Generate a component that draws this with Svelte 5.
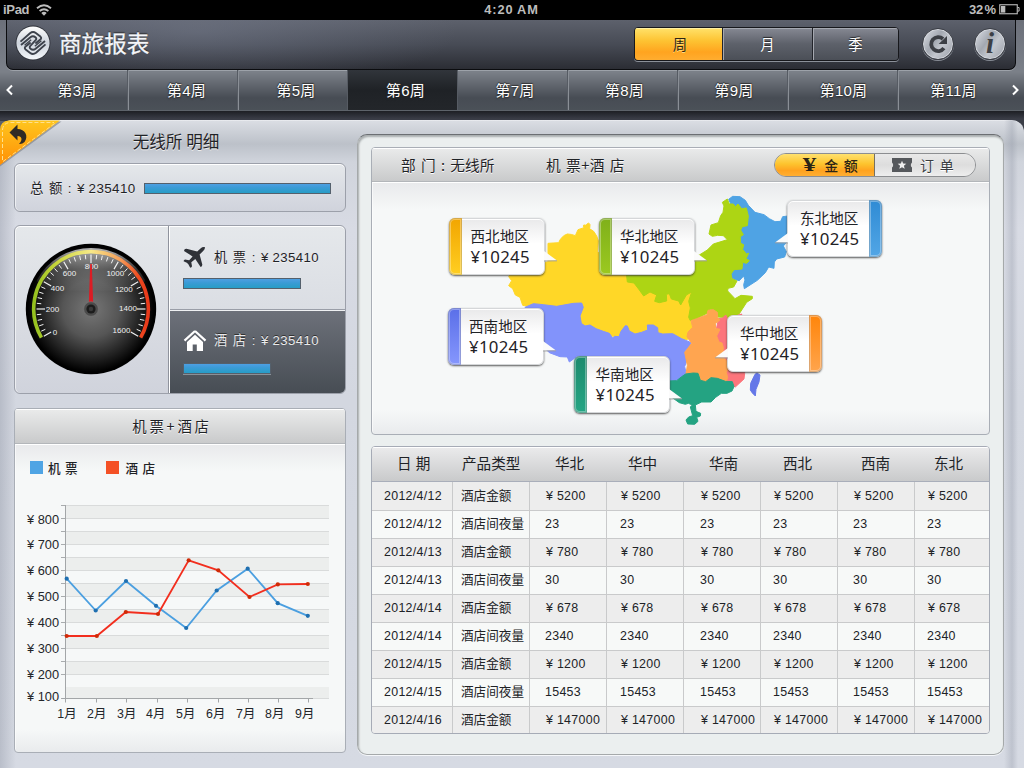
<script>
  const weeks = ['第3周', '第4周', '第5周', '第6周', '第7周', '第8周', '第9周', '第10周', '第11周'];
  const periods = ['周', '月', '季'];
  const columns = ['华北', '华中', '华南', '西北', '西南', '东北'];
  const rows = [
    ['2012/4/12', '酒店金额', '¥ 5200'],
    ['2012/4/12', '酒店间夜量', '23'],
    ['2012/4/13', '酒店金额', '¥ 780'],
    ['2012/4/13', '酒店间夜量', '30'],
    ['2012/4/14', '酒店金额', '¥ 678'],
    ['2012/4/14', '酒店间夜量', '2340'],
    ['2012/4/15', '酒店金额', '¥ 1200'],
    ['2012/4/15', '酒店间夜量', '15453'],
    ['2012/4/16', '酒店金额', '¥ 147000']
  ];

  const regions = [
    { name: '西北地区', x: 77, y: 36, pad: 9.5, side: 'left', from: '#f2a500', to: '#ffcf22' },
    { name: '华北地区', x: 227, y: 36, pad: 9, side: 'left', from: '#7fb01a', to: '#9cc920' },
    { name: '西南地区', x: 76, y: 126, pad: 9, side: 'left', from: '#5a6fe8', to: '#8697fd' },
    { name: '华南地区', x: 202, y: 174, pad: 9.5, side: 'left', from: '#1d8a6d', to: '#25a684' },
    { name: '东北地区', x: 415, y: 18, pad: 12, side: 'right', from: '#2f8bd4', to: '#52a6e6' },
    { name: '华中地区', x: 355, y: 133, pad: 12, side: 'right', from: '#ff850a', to: '#ffa54d' }
  ];

  const stripes = Array.from({ length: 15 }, (_, i) => (i === 14 ? 698.5 : 505.5 + i * 13));
  const yLabels = [
    [800, 524], [700, 549], [600, 575], [500, 601], [400, 626.5], [300, 653], [200, 679], [100, 701]
  ];
  const xLabels = [67, 96.7, 126.7, 155.7, 185.7, 215.7, 245.7, 274.7, 304.7];
  const xTicks = [65.5, 96.5, 126.5, 157.5, 187.5, 218.5, 248.5, 278.5, 308.5];
  const flight = [[66.7, 578.7], [95.7, 610.5], [126, 581], [156, 605.8], [186.2, 628], [216.7, 590.5], [247.7, 568.7], [277.7, 603.2], [307.8, 615.8]];
  const hotel = [[66.7, 636], [96.8, 636], [125.8, 612], [158, 614], [188.7, 560.3], [218.3, 570.3], [249.5, 597], [277.8, 584.4], [307.8, 584]];
  const line = (pts) => pts.map((p) => p.join(',')).join(' ');

  const ticks = Array.from({ length: 41 }, (_, i) => {
    const a = ((210 - i * 6) * Math.PI) / 180;
    const inner = i % 5 === 0 ? 46 : 50;
    return {
      major: i % 5 === 0,
      x1: 65 + Math.cos(a) * inner, y1: 65 - Math.sin(a) * inner,
      x2: 65 + Math.cos(a) * 54.5, y2: 65 - Math.sin(a) * 54.5
    };
  });
  const dial = [
    [0, 29, 91], [200, 26.5, 68], [400, 31.5, 46.5], [600, 43.5, 32], [800, 65.5, 25],
    [1000, 89.3, 32], [1200, 97.8, 48], [1400, 102, 67.2], [1600, 95.5, 88.8]
  ];
</script>

<div class="app">
  <div class="status">
    <div class="device">
      <span>iPad</span>
      <svg width="16" height="12" viewBox="0 0 16 12">
        <g fill="none" stroke="#bdbdbd" stroke-width="1.9">
          <path d="M1 4.3 Q8 -1.6 15 4.3" /><path d="M3.6 7 Q8 3.4 12.4 7" />
        </g>
        <path d="M5.3 8.9 Q8 6.8 10.7 8.9 L8 11.7Z" fill="#bdbdbd" />
      </svg>
    </div>
    <b class="clock">4:20 AM</b>
    <div class="battery">
      <span>32&#8202;%</span>
      <svg width="21" height="11" viewBox="0 0 21 11">
        <rect x=".75" y=".75" width="17.5" height="9" fill="none" stroke="#bdbdbd" stroke-width="1.1" />
        <rect x="2" y="2" width="4.3" height="6.6" fill="#bdbdbd" />
        <path d="M18.5 3.5h1.6v3.6h-1.6" fill="none" stroke="#bdbdbd" />
      </svg>
    </div>
  </div>

  <header>
    <div class="bar">
      <svg class="logo" width="36" height="36" viewBox="0 0 36 36">
        <defs>
          <linearGradient id="logoFill" x2="0" y2="1"><stop offset="0" stop-color="#fff" /><stop offset=".5" stop-color="#cdd3dc" /><stop offset="1" stop-color="#f4f7fa" /></linearGradient>
        </defs>
        <circle cx="18" cy="18" r="17.4" fill="#2b2e36" />
        <circle cx="18" cy="18" r="16.6" fill="url(#logoFill)" />
        <g fill="none" stroke="#3d424c" stroke-width="1.9" stroke-linejoin="round">
          <path d="M5.5 16.6L15 8.2Q18 5.8 20.8 8L25.4 11.6Q27 13 25.3 14.6L20.4 18.6" />
          <path d="M5.5 16.6L15 8.2Q18 5.8 20.8 8L25.4 11.6Q27 13 25.3 14.6L20.4 18.6" transform="rotate(180 18 18)" />
          <path d="M6 20L15.4 12.2Q18 10.2 20.4 12.2Q22.2 13.8 20.4 15.4L15.6 20.6Q13.8 22.2 15.6 23.8Q18 25.8 20.6 23.8L30 16" />
          <path d="M9.6 20.2L16.2 14.8M26.4 15.8L19.8 21.2" stroke-width="1.3" />
        </g>
      </svg>
      <h1>商旅报表</h1>
      <div class="periods">
        {#each periods as p, i}<div class="period" class:on={i === 0}>{p}</div>{/each}
      </div>
      <div class="round">
        <svg width="24" height="24" viewBox="0 0 24 24">
          <path d="M17.9 16.2 A7 7 0 1 1 17 7" fill="none" stroke="#3c3f45" stroke-width="3.8" />
          <path d="M21 4 V12 H12.6 Z" fill="#3c3f45" />
        </svg>
      </div>
      <div class="round info"><i>i</i></div>
    </div>
    <nav>
      <svg class="arrow" width="18" height="40" viewBox="0 0 18 40"><path d="M12 15.5 L7.5 20 L12 24.5" fill="none" stroke="#fff" stroke-width="2" /></svg>
      {#each weeks as w, i}<div class="week" class:active={i === 3} style="padding-left:{9 - i}px">{w}</div>{/each}
      <svg class="arrow" width="16" height="40" viewBox="0 0 16 40"><path d="M5 15.5 L9.5 20 L5 24.5" fill="none" stroke="#fff" stroke-width="2" /></svg>
    </nav>
  </header>

  <main>
    <svg class="ribbon" width="62" height="47" viewBox="0 0 62 47">
      <defs><linearGradient id="orange" x2="0" y2="1"><stop offset="0" stop-color="#ffc61e" /><stop offset="1" stop-color="#ff8f05" /></linearGradient></defs>
      <path d="M0 46.5 L61.5 1.5 L0 1Z" fill="#777b84" opacity=".6" />
      <path d="M0 45 L60 .5 H9 Q0 1 0 10Z" fill="url(#orange)" />
      <path d="M2.5 40 V10 Q3 3 10 2.5 H54 M3 41.5 L56 2.5" fill="none" stroke="#ffe08c" stroke-width="1" stroke-dasharray="4 2" />
      <path d="M9.5 12.5 L17.5 4.5 V9 C25 9 29 16 24.5 22 Q22 24.5 19 24 C23 20 22 16 17.5 16 V20.5Z" fill="#2f2b25" />
    </svg>

    <section class="left">
      <h2>无线所 明细</h2>
      <div class="card total">
        <span class="amount">总 额 : <em>¥</em> 235410</span>
        <div class="meter" style="width:187px"></div>
      </div>

      <div class="card stats">
        <div class="gauge">
          <svg width="132" height="132" viewBox="-1 -1 132 132">
            <defs>
              <radialGradient id="face"><stop offset="0" stop-color="#777" /><stop offset=".45" stop-color="#555" /><stop offset=".8" stop-color="#202020" /><stop offset="1" stop-color="#000" /></radialGradient>
              <linearGradient id="shine" x2="0" y2="1"><stop offset="0" stop-color="#fff" stop-opacity=".7" /><stop offset=".5" stop-color="#fff" stop-opacity=".2" /><stop offset="1" stop-color="#fff" stop-opacity=".02" /></linearGradient>
              <linearGradient id="scale" gradientUnits="userSpaceOnUse" x1="8" y1="0" x2="122" y2="0"><stop offset="0" stop-color="#95c11f" /><stop offset=".2" stop-color="#c8d63c" /><stop offset=".5" stop-color="#f7e988" /><stop offset=".75" stop-color="#f5a05c" /><stop offset=".92" stop-color="#ee4a20" /><stop offset="1" stop-color="#e8391a" /></linearGradient>
            </defs>
            <circle cx="65" cy="65" r="65.2" fill="#000" />
            <circle cx="65" cy="65" r="63" fill="url(#face)" />
            <path d="M11 36 A61.5 61.5 0 0 1 119 36 Q118 48 65 46.5 Q12 48 11 36Z" fill="url(#shine)" />
            <path d="M15.4 93.6 A57.3 57.3 0 1 1 114.6 93.6" fill="none" stroke="url(#scale)" stroke-width="3.6" />
            {#each ticks as t}
              <line x1={t.x1} y1={t.y1} x2={t.x2} y2={t.y2} stroke="#f2f2f2" stroke-width={t.major ? 1.2 : 1} />
            {/each}
            {#each dial as [v, x, y]}<text {x} {y} class="dial">{v}</text>{/each}
            <path d="M64.2 20 H65.8 L67.2 60 H62.8Z" fill="#dc1c24" />
            <circle cx="65" cy="65" r="7.3" fill="#4b4b4b" stroke="#777" stroke-width=".6" />
            <circle cx="65" cy="65" r="4.6" fill="#1c1c1c" />
            <circle cx="65" cy="65" r="2.2" fill="#3a3a3a" />
          </svg>
        </div>
        <div class="split">
          <div class="stat">
            <div class="head">
              <svg width="24" height="24" viewBox="0 0 24 24"><path d="M22 1.2 Q19.6 .6 17.5 2.5 L14.2 5.6 L3.5 2.8 Q1.2 2.6 1 5 L9.6 10.4 L6.2 14.3 L2 13.6 Q.6 14 .6 15.3 L4.3 17 Q4.6 17.8 5.2 18 L7.2 21.8 Q8.8 21.7 9 20.3 L8.3 16.3 L12.3 13 L17.6 21 Q19.4 20.6 19.3 18.6 L16.6 8.4 L20.2 4.9 Q22.2 3 22 1.2Z" fill="#2f3238" /></svg>
              <span class="amount">机 票 : <em>¥</em> 235410</span>
            </div>
            <div class="meter" style="width:118px"></div>
          </div>
          <div class="stat dark">
            <div class="head">
              <svg width="24" height="24" viewBox="0 0 24 24"><path d="M12 2 L1.5 11.6 M12 2 L22.5 11.6" stroke="#fff" stroke-width="2.2" fill="none" /><path d="M12 5.8 L4 13 V22 H9.7 V15.5 H13.8 V22 H20 V13Z" fill="#fff" /></svg>
              <span class="amount">酒 店 : <em>¥</em> 235410</span>
            </div>
            <div class="meter" style="width:88px"></div>
          </div>
        </div>
      </div>

      <div class="card chart">
        <div class="cap">机票+酒店</div>
        <div class="legend">
          <span class="key blue"></span><b>机 票</b>
          <span class="key red"></span><b>酒 店</b>
        </div>
        <svg width="330" height="240" viewBox="15 490 330 240">
          {#each [505, 531, 557, 583, 609, 635, 661, 687] as y}
            <rect x="66" {y} width="263" height={y === 687 ? 11 : 13} fill="#eceeed" />
          {/each}
          {#each stripes as y}
            <line x1="66" y1={y} x2="329" y2={y} stroke="#d9dbdb" />
            <line x1="61" y1={y} x2="66" y2={y} stroke="#a9acae" />
          {/each}
          <path d="M65.5 505V702M62 698.5H313" fill="none" stroke="#a3a6a8" />
          {#each xTicks as x}<line x1={x} y1="699" x2={x} y2="702.5" stroke="#a3a6a8" />{/each}
          {#each yLabels as [v, y]}<text x="27" {y} class="axis">¥ {v}</text>{/each}
          {#each xLabels as x, i}<text {x} y="718" class="axis mid">{i + 1}月</text>{/each}
          <polyline points={line(flight)} fill="none" stroke="#4b9fe0" stroke-width="1.8" />
          {#each flight as [x, y]}<circle cx={x} cy={y} r="2.1" fill="#1f6fb0" />{/each}
          <polyline points={line(hotel)} fill="none" stroke="#f22e1e" stroke-width="1.8" />
          {#each hotel as [x, y]}<circle cx={x} cy={y} r="2.1" fill="#cf2a06" />{/each}
        </svg>
      </div>
    </section>

    <section class="right">
      <div class="card map">
        <div class="cap bar2">
          <span class="dept">部 门 : 无线所</span>
          <span class="kind">机 票+酒 店</span>
          <div class="toggle">
            <div class="opt sel"><b class="yen">¥</b>金 额</div>
            <div class="opt">
              <svg width="20" height="14" viewBox="0 0 20 14"><path d="M0 0H20V4.4Q17.6 7 20 9.6V14H0V9.6Q2.4 7 0 4.4Z" fill="#55585c" /><path d="M10 2.7l1.2 2.9 3.1.2-2.4 2 .8 3L10 9.2l-2.7 1.6.8-3-2.4-2 3.1-.2Z" fill="#eee" /></svg>
              订 单
            </div>
          </div>
        </div>
        <div class="canvas">
          <svg width="617" height="252" viewBox="372 182 617 252">
            <g transform="translate(640 190) scale(.33333)" stroke-linejoin="round" stroke-width="3">
              <path fill="#ffd727" stroke="#ffd727" d="M-276 160L-244 158Q-236 138 -218 132Q-206 132 -194 137L-186 119L-168 113Q-174 102 -162 106Q-154 94 -150 104L-151 117Q-138 120 -130 138L-125 152L-127 185L-60 240L160 280L150 390L159 414L142 427L148 446L100 460L20 450L-160 430L-320 375L-332 350L-352 346L-360 322L-374 315L-382 296L-394 287L-385 272L-394 260L-380 240L-276 215Z" />
              <path fill="#8293fb" stroke="#8293fb" d="M-345 352L-320 341L-290 344L-250 349L-200 340L-175 339L-170 352L-180 378L-176 400L-165 408L-150 405L-132 416L-110 424L-92 430L-82 444L-76 439L-63 440L-57 424L-44 407L-38 408L-32 423L-15 432L5 427L23 420L22 405L40 405L53 413L54 428L68 432L98 431L125 446L154 458L144 474L135 484L142 506L134 530L140 555L100 576L40 590L-100 540L-190 500L-212 516L-218 501L-240 500L-272 488L-300 460Z" />
              <path fill="#4fa3e4" stroke="#4fa3e4" d="M266 28L278 19L300 20L316 31L325 46L345 67L372 74L388 86L405 95L422 94L428 80L445 78L462 110L450 145L430 168L439 185L434 201L410 207L403 216L402 235L386 231L376 248L352 271L313 296L311 284L315 270L311 258L298 272L282 268L273 262L270 200L290 80Z" />
              <path fill="#add514" stroke="#add514" d="M247 37L262 27L268 42L280 42L286 50L294 42L305 56L319 54L325 78L322 107L307 110L302 120L310 134L301 140L302 160L311 164L308 178L319 192L326 190L318 206L328 212L320 220L308 217L306 237L282 239L273 252L276 266L291 273L281 291L264 295L263 303L285 326L303 316L337 319L337 326L320 337L298 371L276 384L234 381L228 365L212 358L203 369L170 386L151 392L146 382L151 354L146 334L155 306L139 315L122 345L116 333L94 327L88 311L79 313L80 333L58 338L44 334L50 315L30 306L11 318L-2 300L-18 279L-38 276L-42 240L60 225L178 195L202 180L220 162L246 154L262 149L250 137L233 136L217 139L207 132L213 105L235 98L242 77L249 67L252 48Z" />
              <path fill="#fc757c" stroke="#fc757c" d="M236 386L248 384L257 375L263 386L305 372L314 550L312 567L286 591L256 575L226 430Z" />
              <path fill="#ffa550" stroke="#ffa550" d="M153 392L170 386L201 374L204 361L220 359L232 367L233 382L240 390L226 401L227 415L240 418L230 438L237 456L246 459L250 472L248 500L262 515L264 536L259 548L263 562L258 578L230 568L218 563L208 573L180 577L174 562L160 549L138 552L142 526L134 487L155 460L141 440L144 426L158 412Z" />
              <path fill="#24a382" stroke="#24a382" d="M84 573L110 572L125 560L137 552L160 549L174 550L181 571L197 575L213 563L232 565L256 574L277 575L282 590L276 603L261 610L244 610L227 622L213 636L185 636L166 645L168 664L182 670L181 678L170 682L174 694L164 703L143 702L138 690L146 681L158 677L151 651L157 645L145 640L136 643L118 638L90 618Z" />
              <path fill="#6477e8" stroke="#6477e8" d="M345 553L351 549L360 555L357 576L348 598L346 618L337 609L331 600L332 580Z" />
            </g>
          </svg>
          {#each regions as r}
            <div class="tip {r.side}" style="left:{r.x}px;top:{r.y}px">
              <div class="strip" style="background:linear-gradient({r.from},{r.to})"></div>
              <div class="words" style="padding-left:{r.pad}px"><span>{r.name}</span><strong>¥10245</strong></div>
              <svg class="beak" width="14" height="13" viewBox="0 0 14 13"><path d="M0 1L13 10.5H0Z" fill="#fbfbfb" /><path d="M0 11L13 10.8" stroke="#9a9a9a" stroke-width=".9" /></svg>
            </div>
          {/each}
        </div>
      </div>

      <div class="table">
        <div class="tr th">
          <div class="h0">日 期</div><div class="h1">产品类型</div>
          {#each columns as c, i}<div class="h c{i}">{c}</div>{/each}
        </div>
        {#each rows as r, n}
          <div class="tr" class:odd={n % 2 === 0}>
            <div class="date">{r[0]}</div><div class="type">{r[1]}</div>
            {#each columns as _, i}<div class="v c{i}" class:plain={r[2][0] !== '¥'}>{r[2]}</div>{/each}
          </div>
        {/each}
      </div>
    </section>
  </main>
</div>

<style>
  :global(body) { margin: 0; background: #2b2e35; }
  * { box-sizing: border-box; }
  .app { width: 1024px; height: 768px; overflow: hidden; display: flex; flex-direction: column; background: linear-gradient(#0000 110px, #1d1f24 111px, #3a3d47 119px, #3a3d47); font-family: "Liberation Sans", "Noto Sans CJK SC", sans-serif; color: #1f2226; }
  .status { height: 20px; flex: none; background: #000; color: #bdbdbd; display: grid; grid-template-columns: 1fr auto 1fr; align-items: center; font-size: 13px; font-weight: bold; line-height: 19px; padding: 0 4px 1px 3px; }
  .device, .battery { display: flex; align-items: center; }
  .device { gap: 7px; letter-spacing: -.3px; }
  .battery { justify-content: flex-end; gap: 3px; }
  .clock { letter-spacing: .9px; font-size: 12.8px; word-spacing: -.5px; padding-right: 0; }

  header { height: 91px; flex: none; background: linear-gradient(#6c707a 0, #7b8089 50px, #7b8088 52px, #474c54 78px, #4b5158 90px, #6f757c 91px); }
  .bar { height: 50px; margin: 0 8px 0 6px; padding: 0 9px 2px 10px; display: flex; align-items: center; border: 1px solid #0b0c0f; border-top: 0; border-radius: 0 0 7px 7px; box-shadow: 0 1px 0 #9da2a9; background: radial-gradient(ellipse 260px 60px at 190px 12px, #7f869966, #0000), linear-gradient(#5d616c, #474b55 50%, #2b2d34); }
  h1 { margin: -2px 0 0 8px; font: 400 22.6px/30px "Noto Sans CJK SC", sans-serif; color: #f4f6fa; text-shadow: 0 -1px 1px #222; -webkit-text-stroke: .3px #f4f6fa; }
  .logo { margin-top: -2px; margin-left: -2px; }
  .periods { margin-left: auto; width: 265px; height: 34px; display: grid; grid-template-columns: 87px 90px 1fr; border: 1px solid #17181c; border-radius: 4px; overflow: hidden; box-shadow: 0 1px 0 #8b9099; margin-top: 1px; }
  .period { display: grid; place-items: center; font: 14.3px/20px "Noto Sans CJK SC", sans-serif; color: #fff; background: linear-gradient(#868993, #5d616a 50%, #4b4f57); border-left: 1px solid #22242a; box-shadow: inset 1px 1px 0 #a5a8b0; text-shadow: 0 -1px 1px #222; }
  .period.on { border-left: 0; padding-left: 3px; background: linear-gradient(#ffe26a, #fdc332 40%, #ffa41f 75%, #ffad30); color: #2c2413; box-shadow: inset 0 1px 0 #fff0a0; text-shadow: 0 1px 0 #ffd97a; }
  .round { width: 32px; height: 32px; margin: 1px 0 0 23px; border-radius: 50%; display: grid; place-items: center; background: linear-gradient(125deg, #dfe2e8, #a3a8b1 40%, #c3c7ce 60%, #9a9ea7); border: 1px solid #3a3d44; box-shadow: inset 0 0 0 1px #d7dae0, 0 1px 0 #878c95; }
  .info { margin-left: 20px; }
  .info i { font: italic bold 29px/28px "Liberation Serif", serif; color: #3c3f45; margin-top: -2px; }
  nav { display: flex; height: 40px; }
  .arrow { flex: none; }
  .week { width: 110px; flex: none; text-align: center; padding-top: 1px; font: 15px/40px "Liberation Sans", "Noto Sans CJK SC", sans-serif; color: #fff; text-shadow: 0 1px 2px #222, 0 -1px 1px #333; border-right: 1px solid #565b63; box-shadow: 1px 0 0 #8a8f96; letter-spacing: .2px; }
  .week:nth-of-type(9) { border-right: 0; box-shadow: none; }
  .week.active { background: linear-gradient(#31353b, #1f2226 50%, #23262a); box-shadow: none; }

  main { flex: 1; margin-top: 9px; position: relative; border-radius: 12px 12px 0 0; display: flex; padding: 0 20px 0 14px; gap: 11px; background: linear-gradient(90deg, #8e94a366, #0000 16px, #0000 1004px, #8e94a355 1012px, #0000 1018px), linear-gradient(#f5f6f8 0, #dadde3 1px, #bcc1c9 24px, #d0d4dc 42px, #d8dbe4 110px, #d3d7e0 280px, #d6dae3 100%); }
  .ribbon { position: absolute; left: 0; top: 0; }
  .left { width: 332px; }
  h2 { margin: 0; height: 43px; padding: 1px 0 0 0; text-align: center; font: 16.6px/40px "Noto Sans CJK SC", sans-serif; text-indent: -8px; text-shadow: 0 1px 0 #eee; }
  .card { border: 1px solid #9ca0aa; border-radius: 6px; overflow: hidden; box-shadow: inset 0 1px 0 #fff, inset 1px 0 0 #ffffff99; }
  .total { height: 49px; display: flex; align-items: center; padding: 2px 14px 0 15px; justify-content: space-between; background: linear-gradient(#e5e8eb, #d0d3dc); }
  .amount { font: 13.2px/20px "Liberation Sans", "Noto Sans CJK SC", sans-serif; letter-spacing: .4px; word-spacing: 1.2px; white-space: nowrap; text-shadow: 0 1px 0 #fff8; }
  .amount em { font-style: normal; margin-right: -1.5px; }
  .total .amount { font-size: 13.4px; word-spacing: 1px; }
  .meter { height: 11px; border: 1px solid #54606c; background: linear-gradient(#4e9fe2, #3b9bd6 40%, #279dc6); }
  .stats { height: 169px; margin-top: 13px; display: flex; background: linear-gradient(#e5e8eb, #d0d3dc); }
  .gauge { width: 154px; padding: 17px 0 0 10px; border-right: 1px solid #8f939d; }
  .dial { font: 8px "Liberation Sans", sans-serif; fill: #f0f0f0; text-anchor: middle; }
  .split { flex: 1; display: flex; flex-direction: column; border-left: 1px solid #fff; }
  .stat { height: 83px; padding: 20px 0 0 13px; }
  .head { display: flex; align-items: center; gap: 7px; height: 24px; }
  .stat .meter { margin-top: 8px; }
  .stat.dark { border-top: 1px solid #9a9ea8; box-shadow: inset 0 1px 0 #eef0f2; height: 84px; background: linear-gradient(#6d717a, #474d54); color: #e9eaec; padding-top: 19px; }
  .dark .amount { text-shadow: 0 -1px 0 #333; }
  .stat.dark .meter { margin-top: 10px; box-shadow: 0 1px 0 #8a9097; }
  .chart { height: 345px; margin-top: 14px; border-color: #a9aeb6; border-radius: 4px; background: linear-gradient(#e8e9eb 35px, #f6f8f8 62px, #f6f8f8 320px, #e9ebed 343px); }
  .cap { height: 35px; border-bottom: 1px solid #b3b6ba; background: linear-gradient(#eaebeb, #c9cacb); text-align: center; font: 14.4px/34px "Noto Sans CJK SC", sans-serif; letter-spacing: 2.8px; box-shadow: inset 0 1px 0 #fff, 0 1px 0 #fff; text-shadow: 0 1px 0 #fff; }
  .chart .cap { padding-right: 16px; }
  .legend { display: flex; align-items: center; height: 46px; padding: 1px 0 0 15px; font: 12.6px/20px "Noto Sans CJK SC", sans-serif; letter-spacing: .8px; }
  .legend b { font-weight: 500; margin: 0 28px 0 5px; }
  .key { width: 13px; height: 13px; }
  .blue { background: #4fa4e4; }
  .red { background: #f45126; }
  .red + b { margin-left: 6px; }
  .chart svg { display: block; }
  .axis { font: 12.8px "Liberation Sans", "Noto Sans CJK SC", sans-serif; fill: #24262a; }
  .mid { text-anchor: middle; font-size: 12.4px; }

  .right { width: 647px; height: 621px; margin-top: 14px; padding: 12px 13px; border: 1px solid #a5a9aa; border-top-color: #6c6f73; border-radius: 10px; background: #ebefef; box-shadow: inset 1px 2px 2px #a9adae, 0 1px 0 #f5f7fa; display: flex; flex-direction: column; gap: 11px; }
  .map { flex: none; width: 619px; height: 288px; border-color: #a9aeb6; border-radius: 4px; background: linear-gradient(#e9eaec 35px, #f6f8f8 62px, #f6f8f8 262px, #e9ebed 100%); }
  .bar2 { height: 34px; display: flex; align-items: center; padding: 0 13px 0 29px; letter-spacing: 0; font-size: 14.7px; text-align: left; }
  .dept { width: 145px; word-spacing: 2px; }
  .kind { letter-spacing: .5px; word-spacing: 1px; }
  .toggle { margin-left: auto; width: 202px; height: 24px; display: grid; grid-template-columns: 100px 1fr; border: 1px solid #8c8e91; border-radius: 12px; overflow: hidden; }
  .opt { display: flex; align-items: center; justify-content: center; gap: 8px; font: 14px/20px "Noto Sans CJK SC", sans-serif; background: linear-gradient(#e9e9e9, #ddd 50%, #eee); word-spacing: 2px; letter-spacing: .3px; color: #3a3d41; padding-right: 4px; }
  .opt.sel { gap: 10px; background: linear-gradient(#ffe16e, #fdc42e 45%, #ffa31f 75%, #ffae33); border-right: 1px solid #77705f; color: #2b2416; padding: 0 0 0 14px; font-weight: 500; text-shadow: none; }
  .yen { font: bold 18px/20px "Liberation Serif", serif; transform: scaleX(1.5); }
  .canvas { position: relative; }
  .canvas > svg { display: block; }
  .tip { position: absolute; width: 96px; height: 57px; border-radius: 6px; display: flex; background: linear-gradient(#e9e9ea, #fff 45%); border: 1px solid #d5d7d9; box-shadow: 0 1px 2px #333c, inset 0 1px 0 #fff; }
  .strip { width: 13px; margin: -1px; border-radius: 6px 0 0 6px; box-shadow: inset 0 0 0 1px #0002, inset 0 0 0 2px #ffffff55; }
  .words { flex: 1; padding-top: 7px; display: flex; flex-direction: column; }
  .words span { font: 14.6px/20px "Noto Sans CJK SC", sans-serif; white-space: nowrap; }
  .words strong { font: 400 16.8px/21px "Noto Sans", sans-serif; letter-spacing: .3px; }
  .beak { position: absolute; left: 93.5px; top: 31px; }
  .tip.right { width: 95px; margin: 0; padding: 0; gap: 0; flex-direction: row-reverse; background: linear-gradient(#e9e9ea, #fff 45%); border: 1px solid #d5d7d9; border-radius: 6px; box-shadow: 0 1px 2px #333c, inset 0 1px 0 #fff; height: 57px; }
  .tip.right .strip { border-radius: 0 6px 6px 0; }
  .tip.right .beak { left: auto; right: 93px; transform: scaleX(-1); }

  .table { width: 619px; height: 288px; flex: none; border: 1px solid #a6abb6; border-radius: 4px; overflow: hidden; background: #ededed; }
  .tr { display: grid; grid-template-columns: 81px repeat(5, 77px) 77px 75px; height: 28px; background: #f7f9f8; }
  .tr > div { border-right: 1px solid #c9cacb; border-bottom: 1px solid #c9cacb; white-space: nowrap; font: 12.4px/27px "Liberation Sans", "Noto Sans CJK SC", sans-serif; color: #202226; letter-spacing: .3px; }
  .tr > div:last-child { border-right: 0; }
  .tr.odd { background: #ededed; }
  .tr.th { height: 35px; background: linear-gradient(#ebebec, #c8c9ca); box-shadow: inset 0 1px 0 #fff; }
  .tr.th > div { border-right: 0; border-bottom-color: #a9aeba; font: 14.6px/32px "Noto Sans CJK SC", sans-serif; letter-spacing: 0; }
  .tr .h0 { padding-left: 25px; word-spacing: 1px; }
  .tr .h1 { padding-left: 9px; }
  .tr .date { padding: 1px 0 0 12px; }
  .tr .type { padding: 1px 0 0 8px; letter-spacing: 0; font-size: 12.6px; }
  .tr .v { padding-top: 1px; }
  .v.c0 { padding-left: 16px; } .v.c1 { padding-left: 14px; } .v.c2 { padding-left: 17px; }
  .v.c3 { padding-left: 13px; } .v.c4 { padding-left: 16px; } .v.c5 { padding-left: 13px; }
  .v.plain { text-indent: -1px; }
  .h.c0 { padding-left: 25px; } .h.c1 { padding-left: 21px; } .h.c2 { padding-left: 25px; }
  .h.c3 { padding-left: 22px; } .h.c4 { padding-left: 23px; } .h.c5 { padding-left: 19px; }
</style>
